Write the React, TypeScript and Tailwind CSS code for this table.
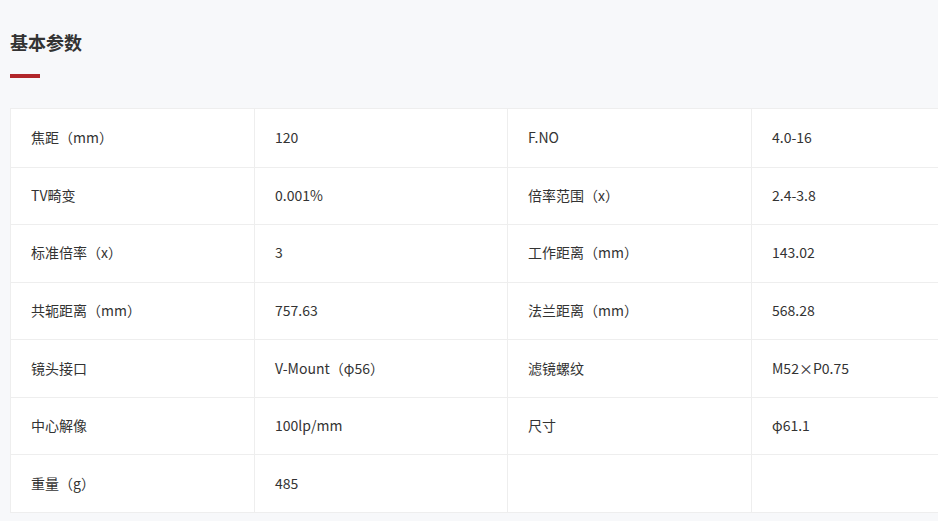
import React from "react";

const rows: [string, string, string, string][] = [
  ["焦距（mm）", "120", "F.NO", "4.0-16"],
  ["TV畸变", "0.001%", "倍率范围（x）", "2.4-3.8"],
  ["标准倍率（x）", "3", "工作距离（mm）", "143.02"],
  ["共轭距离（mm）", "757.63", "法兰距离（mm）", "568.28"],
  ["镜头接口", "V-Mount（φ56）", "滤镜螺纹", "M52×P0.75"],
  ["中心解像", "100lp/mm", "尺寸", "φ61.1"],
  ["重量（g）", "485", "", ""],
];

export default function App() {
  return (
    <div
      className="w-[938px] h-[521px] overflow-hidden bg-[#f7f8fa] text-[#333]"
      style={{ fontFamily: '"Microsoft YaHei", "Noto Sans CJK SC", "Noto Sans", sans-serif' }}
    >
      <div className="pl-[10px] pt-[29px]">
        <h2 className="text-[18px] font-bold leading-[26px] text-[#333]">基本参数</h2>
        <div className="mt-[19px] h-[4px] w-[30px] bg-[#b1262a]" />
        <div className="mt-[30px] w-[996px] h-[405px] grid grid-rows-7 bg-white border border-[#eeeeee]">
          {rows.map((r, i) => (
            <div
              key={i}
              className={`grid grid-cols-[243px_253px_244px_253px] ${i > 0 ? "border-t border-[#eeeeee]" : ""}`}
            >
              {r.map((c, j) => (
                <div
                  key={j}
                  className={`flex items-center pl-[20px] pb-[1px] text-[14px] ${j > 0 ? "border-l border-[#eeeeee]" : ""}`}
                >
                  {c}
                </div>
              ))}
            </div>
          ))}
        </div>
      </div>
    </div>
  );
}
